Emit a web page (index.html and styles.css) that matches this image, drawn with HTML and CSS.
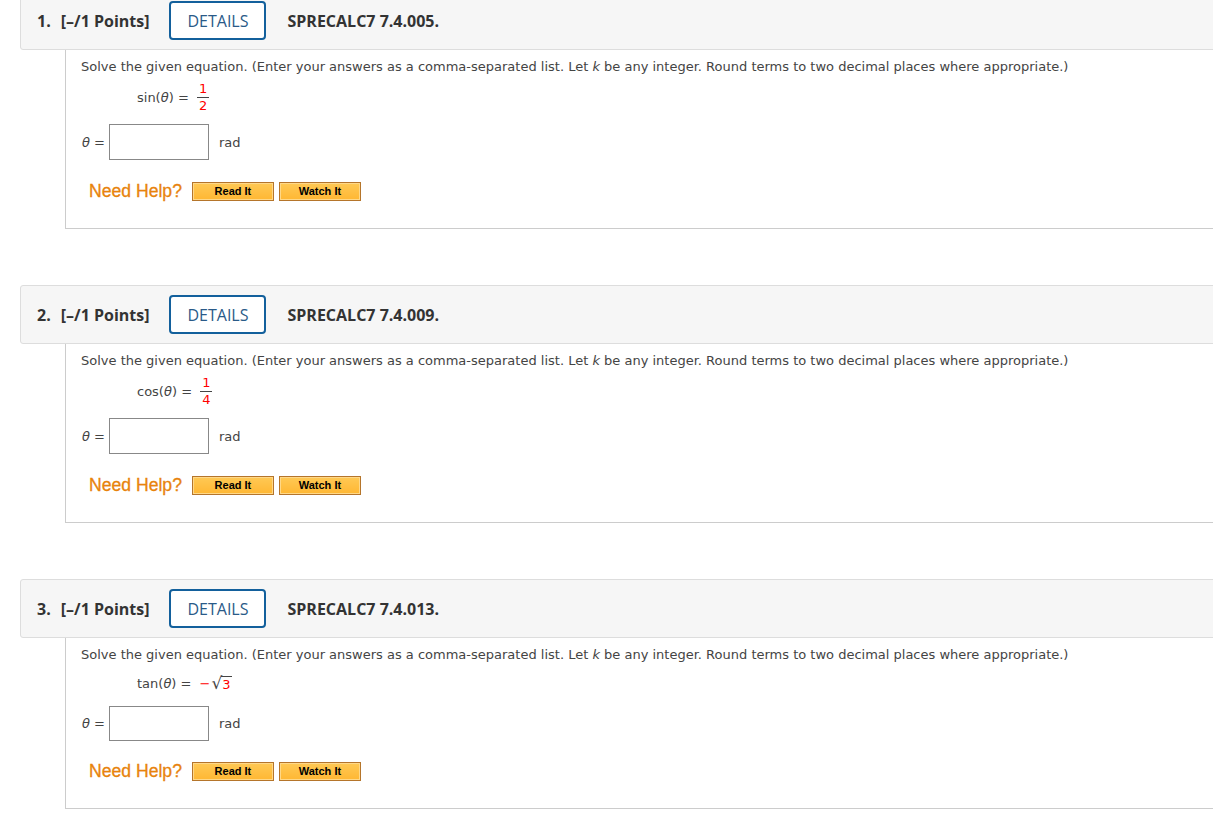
FILE: index.html
```html
<!DOCTYPE html>
<html>
<head>
	<meta charset="utf-8">
	<title>Assignment</title>
	<link rel="stylesheet" href="styles.css">
</head>
<body>

<div class="page">

	<!-- question 1 -->
	<div class="question">
		<div class="q-head">
			<span class="q-num">1.</span>
			<span class="q-pts">[&ndash;/1 Points]</span>
			<a href="#" class="details">DETAILS</a>
			<span class="q-code">SPRECALC7 7.4.005.</span>
		</div>
		<div class="q-body">
			<p class="prompt">Solve the given equation. (Enter your answers as a comma-separated list. Let <i>k</i> be any integer. Round terms to two decimal places where appropriate.)</p>
			<div class="eq">sin(<i>&theta;</i>) = <span class="frac"><span class="top">1</span><span class="bot">2</span></span></div>
			<div class="answer"><span class="lbl"><i>&theta;</i> =</span><input type="text" class="ans"><span class="unit">rad</span></div>
			<div class="help">
				<span class="need">Need Help?</span>
				<a href="#" class="hbtn">Read It</a>
				<a href="#" class="hbtn">Watch It</a>
			</div>
		</div>
	</div>

	<!-- question 2 -->
	<div class="question">
		<div class="q-head">
			<span class="q-num">2.</span>
			<span class="q-pts">[&ndash;/1 Points]</span>
			<a href="#" class="details">DETAILS</a>
			<span class="q-code">SPRECALC7 7.4.009.</span>
		</div>
		<div class="q-body">
			<p class="prompt">Solve the given equation. (Enter your answers as a comma-separated list. Let <i>k</i> be any integer. Round terms to two decimal places where appropriate.)</p>
			<div class="eq">cos(<i>&theta;</i>) = <span class="frac"><span class="top">1</span><span class="bot">4</span></span></div>
			<div class="answer"><span class="lbl"><i>&theta;</i> =</span><input type="text" class="ans"><span class="unit">rad</span></div>
			<div class="help">
				<span class="need">Need Help?</span>
				<a href="#" class="hbtn">Read It</a>
				<a href="#" class="hbtn">Watch It</a>
			</div>
		</div>
	</div>

	<!-- question 3 -->
	<div class="question">
		<div class="q-head">
			<span class="q-num">3.</span>
			<span class="q-pts">[&ndash;/1 Points]</span>
			<a href="#" class="details">DETAILS</a>
			<span class="q-code">SPRECALC7 7.4.013.</span>
		</div>
		<div class="q-body">
			<p class="prompt">Solve the given equation. (Enter your answers as a comma-separated list. Let <i>k</i> be any integer. Round terms to two decimal places where appropriate.)</p>
			<div class="eq eq-root">tan(<i>&theta;</i>) = <span class="red">&minus;</span><span class="root"><span class="radic">&radic;</span><span class="rad-in">3</span></span></div>
			<div class="answer answer-root"><span class="lbl"><i>&theta;</i> =</span><input type="text" class="ans"><span class="unit">rad</span></div>
			<div class="help help-root">
				<span class="need">Need Help?</span>
				<a href="#" class="hbtn">Read It</a>
				<a href="#" class="hbtn">Watch It</a>
			</div>
		</div>
	</div>

</div>

</body>
</html>
```

FILE: styles.css
```css
* { margin:0px; padding:0px; box-sizing:border-box; }
html, body { overflow:hidden; background:#fff; }
body { font-family:"DejaVu Sans", Verdana, sans-serif; }

.page { padding-left:20px; margin-top:-9px; width:1240px; }

.question { margin-bottom:56px; }

/* header bar */
.q-head { height:59px; display:flex; align-items:center; background:#f6f6f6; border:1px solid #ddd; border-radius:3px; padding-left:16px; font:bold 16px "Open Sans", sans-serif; color:#333; }
.q-pts { margin-left:10px; color:#333; }
.details { display:flex; align-items:center; justify-content:center; width:97px; height:39px; margin-left:20px; border:2px solid #13609c; border-radius:4px; background:#fff; font:normal 16px "Open Sans", sans-serif; color:#2a5a88; text-decoration:none; }
.q-code { margin-left:21px; }

/* question body */
.q-body { margin-left:45px; border-left:1px solid #ccc; border-bottom:1px solid #ccc; padding:9px 0px 27px 0px; font-size:13px; color:#444; }
.prompt { line-height:16px; padding-left:15px; }

.eq { margin-top:7px; padding-left:71px; height:30px; display:flex; align-items:center; white-space:pre; }
.frac { display:inline-flex; flex-direction:column; align-items:center; color:#f00; margin-left:4px; line-height:14px; }
.frac .top { border-bottom:1px solid #444; padding:0px 2px 1px 2px; }
.frac .bot { padding-top:1px; }

.eq-root { margin-top:8px; height:24px; }
.red { color:#f00; margin-left:4px; }
.root { display:inline-flex; align-items:flex-end; margin-left:1px; }
.radic { font-size:17px; line-height:18px; color:#444; }
.rad-in { color:#f00; border-top:1px solid #444; line-height:15px; padding:0px 1px; margin-left:-1px; }

.answer { margin-top:12px; padding-left:16px; display:flex; align-items:center; }
.lbl { white-space:pre; }
.answer-root { margin-top:11px; }
.ans { width:100px; height:36px; border:1px solid #888; margin-left:4px; margin-right:10px; background:#fff; }
.answer-root .ans { height:35px; }

.help { margin-top:22px; padding-left:23px; height:19px; display:flex; align-items:center; }
.help-root { margin-top:21px; }
.need { font:normal 17.6px/19px "Liberation Sans", Arial, sans-serif; color:#e8830c; margin-right:10px; -webkit-text-stroke:0.3px #e8830c; }
.hbtn { display:block; width:82px; height:19px; margin-right:5px; border:1px solid #b5752b; background:linear-gradient(#ffc955, #ffb733); box-shadow:inset 0px 0px 0px 1px #ffd888; font:bold 11px/17px "Liberation Sans", Arial, sans-serif; color:#000; text-align:center; text-decoration:none; }
```
